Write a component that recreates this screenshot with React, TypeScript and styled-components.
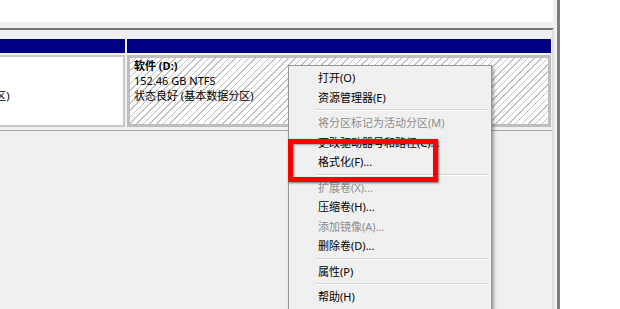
import React from 'react'
import styled, { createGlobalStyle } from 'styled-components'

const GlobalStyle = createGlobalStyle`
  html, body {
    margin: 0;
    padding: 0;
    background: #ffffff;
  }
  body {
    width: 620px;
    height: 309px;
    overflow: hidden;
    font-family: "Noto Sans", "Noto Sans CJK SC", sans-serif;
    font-size: 11px;
    color: #000;
  }
`

type MenuEntry = { label: string; disabled?: boolean } | 'sep'

const menuEntries: MenuEntry[] = [
    { label: '打开(O)' },
    { label: '资源管理器(E)' },
    'sep',
    { label: '将分区标记为活动分区(M)', disabled: true },
    { label: '更改驱动器号和路径(C)...' },
    { label: '格式化(F)...' },
    'sep',
    { label: '扩展卷(X)...', disabled: true },
    { label: '压缩卷(H)...' },
    { label: '添加镜像(A)...', disabled: true },
    { label: '删除卷(D)...' },
    'sep',
    { label: '属性(P)' },
    'sep',
    { label: '帮助(H)' },
]

const App: React.FC = () => {
    return (
        <>
            <GlobalStyle />
            <Screen>
                <ConsoleFrame>
                    <ListArea />
                    <Splitter />
                    <GraphPane>
                        <DiskRow>
                            {/* partition scrolled partly out of view on the left */}
                            <Partition $width={125}>
                                <PartitionHeader />
                                <PartitionBody>
                                    <Lines $offset={-114}>
                                        <Line $bold />
                                        <Line />
                                        <Line>状态良好 (基本数据分区)</Line>
                                    </Lines>
                                </PartitionBody>
                            </Partition>
                            <Partition $width={424}>
                                <PartitionHeader />
                                <PartitionBody $selected>
                                    <Lines>
                                        <Line $bold>软件 (D:)</Line>
                                        <Line>152.46 GB NTFS</Line>
                                        <Line>状态良好 (基本数据分区)</Line>
                                    </Lines>
                                </PartitionBody>
                            </Partition>
                        </DiskRow>
                    </GraphPane>
                </ConsoleFrame>

                <ContextMenu>
                    {menuEntries.map((entry, i) =>
                        entry === 'sep' ? (
                            <MenuSeparator key={i} />
                        ) : (
                            <MenuItem key={i} $disabled={entry.disabled}>
                                {entry.label}
                            </MenuItem>
                        )
                    )}
                </ContextMenu>

                <Highlight />
            </Screen>
        </>
    )
}

const Screen = styled.div`
position: relative;
display: flex;
width: 620px;
height: 309px;
overflow: hidden;
background: #ffffff;
`

const ConsoleFrame = styled.div`
display: flex;
flex-direction: column;
width: 557px;
height: 100%;
background: #f0f0f0;
border-right: 3px solid #7d7d7d;
`

const ListArea = styled.div`
height: 22px;
margin-right: 4px;
background: #ffffff;
`

const Splitter = styled.div`
height: 6px;
`

const GraphPane = styled.div`
flex: 1;
width: 552px;
border-top: 2px solid #767676;
border-right: 2px solid #dcdcdc;
`

const DiskRow = styled.div`
display: flex;
gap: 2px;
padding-top: 9px;
padding-bottom: 3px;
border-bottom: 1px solid #a8a8a8;
`

const Partition = styled.div<{ $width: number }>`
display: flex;
flex-direction: column;
gap: 2px;
width: ${p => p.$width}px;
overflow: hidden;
`

const PartitionHeader = styled.div`
height: 14px;
background: #000080;
`

const PartitionBody = styled.div<{ $selected?: boolean }>`
box-sizing: border-box;
height: 72px;
overflow: hidden;
padding-left: 4px;
${p =>
        p.$selected
            ? `
  border: 3px solid #bebebe;
  background: repeating-linear-gradient(135deg, #ffffff 0 3.6px, #c2c2c2 3.6px 4.7px);
`
            : `
  border: 2px solid #c8c8c8;
  border-left: none;
  padding-top: 1px;
  background: #ffffff;
`}
`

const Lines = styled.div<{ $offset?: number }>`
margin-left: ${p => p.$offset ?? 0}px;
white-space: nowrap;
`

const Line = styled.div<{ $bold?: boolean }>`
height: 15px;
line-height: 15px;
font-weight: ${p => (p.$bold ? 700 : 400)};
`

const ContextMenu = styled.div`
position: absolute;
left: 288px;
top: 65px;
width: 202px;
padding: 2px 0;
background: #f0f0f0;
border: 1px solid #979797;
box-shadow: 2px 2px 3px rgba(0, 0, 0, 0.35);
`

const MenuItem = styled.div<{ $disabled?: boolean }>`
height: 19.5px;
line-height: 19.5px;
padding-left: 29px;
white-space: nowrap;
color: ${p => (p.$disabled ? '#8d8d8d' : '#000000')};
`

const MenuSeparator = styled.div`
height: 6px;
display: flex;
align-items: center;
margin: 0 3px 0 26px;
&::before {
    content: '';
    flex: 1;
    height: 1px;
    background: #d7d7d7;
    border-bottom: 1px solid #ffffff;
}
`

const Highlight = styled.div`
position: absolute;
left: 288px;
top: 139px;
width: 150px;
height: 43px;
box-sizing: border-box;
border: 5px solid #ff0000;
box-shadow: 1px 1px 2px rgba(0, 0, 0, 0.55), inset 1px 1px 2px rgba(0, 0, 0, 0.35);
`

export default App
